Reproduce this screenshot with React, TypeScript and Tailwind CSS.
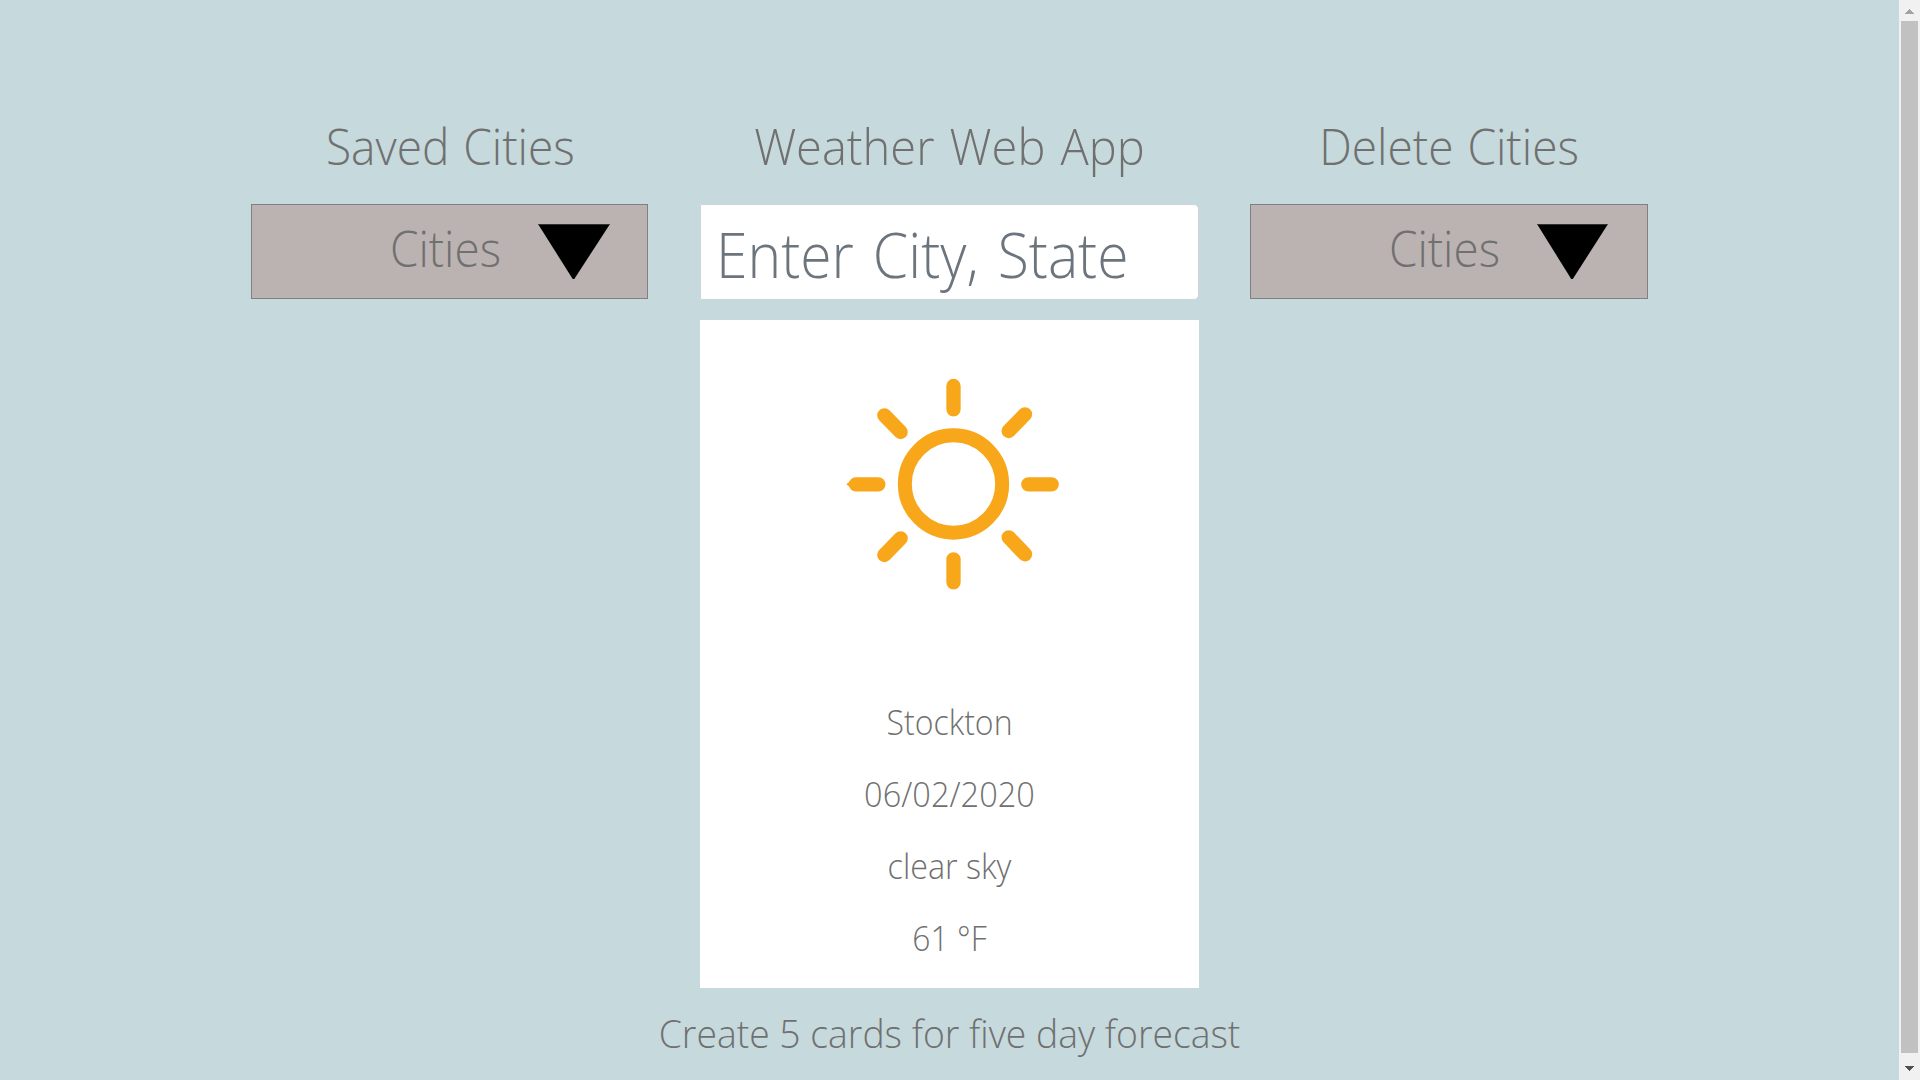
import React from "react";

function Triangle({ className }: { className: string }) {
  return (
    <svg viewBox="0 0 72 55" preserveAspectRatio="none" className={className} aria-hidden="true">
      <path d="M0 0H72L36.3 55H34.7Z" fill="#000" />
      <path d="M0 0.4H72" stroke="#4a4646" strokeWidth="0.8" />
    </svg>
  );
}

type CityColumnProps = {
  title: string;
  titleClass: string;
  columnClass: string;
  triangleClass: string;
};

function CityColumn({ title, titleClass, columnClass, triangleClass }: CityColumnProps) {
  return (
    <section className={columnClass}>
      <h2 className="flex h-[60px] items-center justify-center text-[49px] leading-[60px] whitespace-nowrap">
        <span className={titleClass}>{title}</span>
      </h2>
      <button className="mt-7 flex h-[95px] w-full items-start border border-[#808080] bg-[#bbb3b1]">
        <span className="mt-[13px] ml-[138px] origin-left scale-x-[0.935] text-[49px] leading-[60px]">
          Cities
        </span>
        <Triangle className={triangleClass} />
      </button>
    </section>
  );
}

function Sun() {
  return (
    <svg
      viewBox="0 0 720 720"
      className="mt-10 ml-[130px] h-[240px] w-[240px] shrink-0"
      fill="none"
      stroke="#f8a71b"
      strokeLinecap="round"
      aria-hidden="true"
    >
      <circle cx="370.5" cy="372" r="146" strokeWidth="42" />
      <g strokeWidth="43">
        <path d="M370.5 78V148M370.5 598V667M78 373H145M595 373H665" />
        <path d="M163 166L212 216M585 163L536 213M163 585L212 535M536 532L585 583" />
      </g>
      <path d="M75 352L49 373L75 394Z" fill="#f8a71b" stroke="none" />
    </svg>
  );
}

const details = [
  { text: "Stockton", className: "scale-x-[0.915]" },
  { text: "06/02/2020", className: "scale-x-[0.93]" },
  { text: "clear sky", className: "scale-x-[0.922]" },
  { text: "61 °F", className: "scale-x-[0.91]" },
];

export default function App() {
  return (
    <div className="flex h-[1080px] w-[1920px] overflow-hidden bg-[#c6d9dc] font-['Open_Sans',sans-serif] font-light text-[#707070]">
      <main className="flex w-[1899px] flex-col pt-[116px]">
        <div className="flex items-start pl-[251px]">
          <CityColumn
            title="Saved Cities"
            titleClass="ml-0.5 scale-x-[0.94] [word-spacing:2px]"
            columnClass="w-[397px]"
            triangleClass="mt-[19px] ml-[29px] h-[55px] w-[72px]"
          />
          <section className="ml-[52px] w-[499px]">
            <h1 className="flex h-[60px] items-center justify-center text-[49px] leading-[60px] whitespace-nowrap">
              <span className="scale-x-[0.96] [word-spacing:3px]">Weather Web App</span>
            </h1>
            <div className="mt-7 flex h-24 items-center rounded-r-[5px] border border-[#ced4da] bg-white pt-1 pl-[15px] text-[62px] text-[#6c757d]">
              <span className="origin-left scale-x-[0.92] whitespace-nowrap [word-spacing:4.6px]">
                Enter City, State
              </span>
            </div>
            <article className="mt-5 flex h-[668px] flex-col bg-white">
              <Sun />
              <div className="mt-[86px] flex flex-col text-center text-[35px] leading-[72px]">
                {details.map((d) => (
                  <p key={d.text} className={d.className}>
                    {d.text}
                  </p>
                ))}
              </div>
            </article>
          </section>
          <CityColumn
            title="Delete Cities"
            titleClass="scale-x-[0.94] [word-spacing:2px]"
            columnClass="ml-[51px] w-[398px]"
            triangleClass="mt-[19px] ml-[29px] h-[55px] w-[71px]"
          />
        </div>
        <p className="mt-[15px] scale-x-[0.957] text-center text-[39px] leading-[60px]">
          Create 5 cards for five day forecast
        </p>
      </main>
      <aside className="flex w-[21px] flex-col items-center bg-[#f1f1f1]">
        <svg width="9" height="5" viewBox="0 0 9 5" className="mt-[9px]" shapeRendering="crispEdges">
          <path d="M4.5 0L9 5H0Z" fill="#a3a3a3" />
        </svg>
        <div className="mt-[7px] h-[1032px] w-[17px] bg-[#c1c1c1]" />
        <svg width="9" height="5" viewBox="0 0 9 5" className="mt-[13px]" shapeRendering="crispEdges">
          <path d="M0 0H9L4.5 5Z" fill="#505050" />
        </svg>
      </aside>
    </div>
  );
}
